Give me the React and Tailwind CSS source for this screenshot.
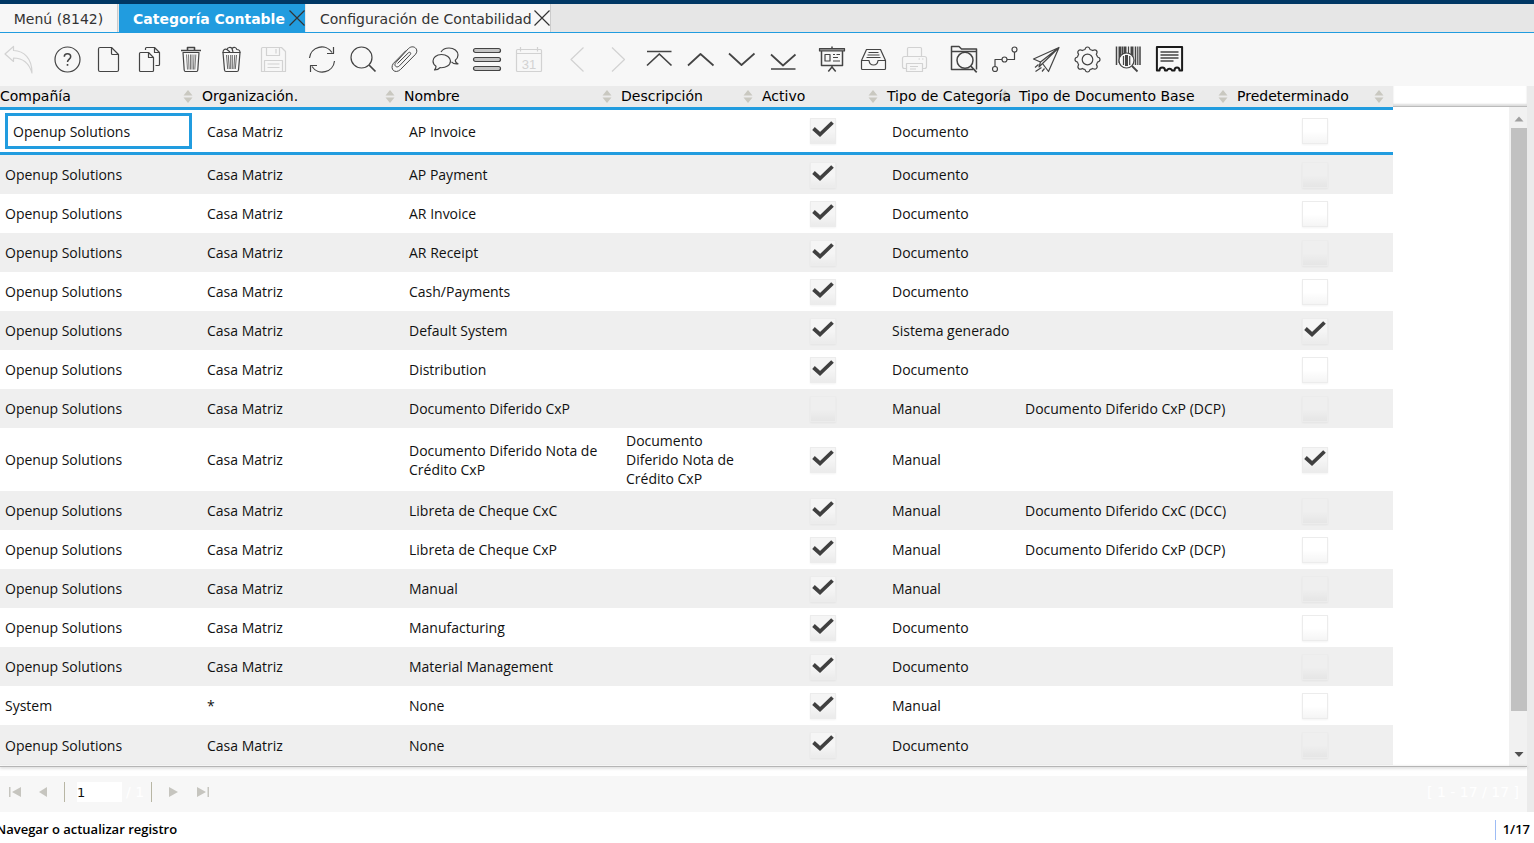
import React from "react";

const BARS = [5.5, 14.5, 23.5];

const ICONS = {
  undo: <path d="M4 11L12.500 3.500V7.500C23 8 31 15 31 30C28 20 22 15 12.500 15V18.500Z" />,
  help: (
    <>
      <circle cx="16.500" cy="16.500" r="12.500" />
      <path d="M13.300 13.800C13.300 9.800 19.700 9.900 19.700 13.700C19.700 16 16.500 16.200 16.500 19" strokeWidth="1.500" />
      <path d="M16.500 21V22.800" strokeWidth="1.600" />
    </>
  ),
  file: (
    <>
      <path d="M6.500 6Q6.500 4.500 8 4.500H19.500L26.500 11.500V27Q26.500 28.500 25 28.500H8Q6.500 28.500 6.500 27Z" />
      <path d="M19.500 4.500V10.500Q19.500 11.500 20.500 11.500H26.500" />
    </>
  ),
  copy: (
    <>
      <path d="M7.500 9.500H15.500L20.500 14.500V27.500Q20.500 28.500 19.500 28.500H7.500Q6.500 28.500 6.500 27.500V10.500Q6.500 9.500 7.500 9.500Z" />
      <path d="M15.500 9.500V14.500H20.500" />
      <path d="M12.500 7V5.500Q12.500 4.500 13.500 4.500H21.500L26.500 9.500V21.500Q26.500 22.500 25.500 22.500H22.500M21.500 4.500V9.500H26.500" />
    </>
  ),
  trash: (
    <>
      <path d="M7 7.500H27M13.500 7V4.500H20.500V7" strokeWidth="1.600" />
      <path d="M9 9.500H25L23.800 27Q23.700 28.500 22.500 28.500H11.500Q10.300 28.500 10.200 27Z" />
      <path d="M12.500 11.500L13.500 26.500M14.500 11.500L15 26.500M16.500 11.500V26.500M18 11.500V26.500M20 11.500L19.500 26.500M21.800 11.500L20.800 26.500" strokeWidth="0.700" />
    </>
  ),
  trashFull: (
    <>
      <path d="M8 9.500C8 6.500 10 5.500 12 6.500C12.500 4 16 4 17 5.500C19 3.500 21.500 4.500 21.800 6.500C24 6.500 25 8 25 9.500Z" />
      <path d="M12 6.500L15 9M17 5.500L18 9" />
      <path d="M8 9.500H25L23.500 27Q23.300 28.500 22 28.500H11Q9.700 28.500 9.500 27Z" />
      <path d="M11.500 12L12.700 26M13.300 12L14.300 26M15.700 12V26M17.300 12V26M19.700 12L18.900 26M21.500 12L20.300 26" strokeWidth="0.800" />
    </>
  ),
  save: (
    <>
      <path d="M6.500 4.500H25.500L29.500 8.500V28.500H5.500V5.500Q5.500 4.500 6.500 4.500Z" />
      <path d="M10.500 4.500V12.500H23.500V4.500M20 6V10.500M8.500 28.500V17.500H26.500V28.500M11.500 21H23.500M11.500 24.500H23.500" />
    </>
  ),
  refresh: (
    <>
      <path d="M3.500 15A12.300 12.300 0 0 1 26 9.500M28.500 18A12.300 12.300 0 0 1 6 23.500" />
      <path d="M27.500 4V10.500H21M4.500 29V22.500H11" />
    </>
  ),
  search: (
    <>
      <circle cx="14.500" cy="14.500" r="10.500" />
      <path d="M22 22L28.500 28.500" strokeWidth="1.700" />
    </>
  ),
  clip: (
    <path strokeWidth="1" d="M9.500 20.500L20.500 9.700C21.800 8.500 23.500 10 22.300 11.500L11.500 22.800C8.500 25.700 5.200 22.300 8 19.300L20.500 5.500C25.500 1 31.500 6.500 27.500 11.300L12.500 26.500C7 31.500 1.500 26 5.300 20.500L18 7.500" />
  ),
  chat: (
    <>
      <path d="M12.500 11.500C7.500 11.500 4 14.500 4 18C4 20.300 5.200 22 7 23.200C7 25 6.500 26 5.500 27C8 27 10 26 11 24.700C17 25.200 21.500 22 21.500 18C21.500 14.500 17.500 11.500 12.500 11.500Z" />
      <path d="M12 9C13.500 6.500 16.500 5 20 5C25 5 29 8 29 12C29 14.500 28 16 26.300 17.200C26.300 18.800 27 20 29 20.800C26 21.200 23.700 20.200 22.500 18.800" />
    </>
  ),
  menu: (
    <>
      {BARS.map((y) => (
        <rect key={y} x="3.500" y={y} width="27" height="4" rx="2" fill="#c4c4c4" />
      ))}
    </>
  ),
  calendar: (
    <>
      <rect x="5.500" y="6.500" width="25" height="22" rx="1" />
      <path d="M5.500 10.500H30.500M9.500 4V8.500M26.500 4V8.500" />
      <text x="18" y="25.500" textAnchor="middle" fontSize="13" stroke="none" fill="currentColor" className="font-['Liberation_Sans',sans-serif]">31</text>
    </>
  ),
  left: <path d="M22.500 4.500L10 16.500L22.500 28.500" />,
  right: <path d="M10 4.500L22.500 16.500L10 28.500" />,
  first: <path d="M4 8.500H28.500M4 22.500L16.300 11L28.500 22.500" strokeWidth="1.700" />,
  up: <path d="M4 22.500L16.500 11L29.500 22.500" strokeWidth="1.700" />,
  down: <path d="M4 10.500L16.500 22L29.500 10.500" strokeWidth="1.700" />,
  last: <path d="M5 11.500L17 22.500L29.500 11.500M5 26H29.500" strokeWidth="1.700" />,
  board: (
    <>
      <rect x="3.500" y="5.500" width="25" height="2.500" fill="#888" />
      <path d="M16 3.500V5.500M5.500 8V22.500H26.500V8M16 22.500V25M16 24L12.300 28.500M16 24L19.700 28.500" strokeWidth="1.500" />
      <path d="M9 11.500H14V18H9ZM17 11.500H19M20.500 11.500H24M17 14.500H22M17 18H24" />
    </>
  ),
  inbox: (
    <>
      <path d="M9.500 6.500H23.500L28.500 17.500V25.500Q28.500 26.500 27.500 26.500H5.500Q4.500 26.500 4.500 25.500V17.500Z" />
      <path d="M4.500 17.500H12Q12.500 22 16.500 22T21 17.500H28.500M11.500 9.500H21.500M10.500 12H22.500M9.500 14.500H23.500" />
    </>
  ),
  print: (
    <>
      <path d="M9.500 13V5.500Q9.500 4.500 10.500 4.500H22.500Q23.500 4.500 23.500 5.500V13" />
      <path d="M8.500 25.500H6.500Q4.500 25.500 4.500 23.500V15.500Q4.500 13.500 6.500 13.500H26.500Q28.500 13.500 28.500 15.500V23.500Q28.500 25.500 26.500 25.500H24.500" />
      <path d="M8.500 20.500H24.500V28.500H8.500ZM12 23.500H20M12 26H18M20.500 16H22M24 16H25.500" />
    </>
  ),
  folder: (
    <>
      <path d="M25 26.500H3.500V3.500H11L13.500 6H28.500V26.500M3.500 8.500H28.500" strokeWidth="1.500" />
      <circle cx="17" cy="17.300" r="8" fill="#f7f7f7" strokeWidth="1.500" />
      <path d="M22.700 23L28.700 29.300" strokeWidth="1.700" />
    </>
  ),
  route: (
    <>
      <circle cx="6" cy="26" r="2.500" />
      <circle cx="15.500" cy="16.500" r="2.500" />
      <circle cx="25.500" cy="6.500" r="2.500" />
      <path d="M6 23.500V16.500H13M18 16.500H25.500V9" />
    </>
  ),
  send: (
    <>
      <path d="M29 4.500L3.500 16L10.500 19L29 4.500L12.500 20.500L18.500 28.500L29 4.500" />
      <path d="M10.500 19L9 24L12.500 20.500M11.500 24.500L5.500 28.500M8.500 21.500L5 24.500M14.500 25.500L12 28.500" />
    </>
  ),
  gear: (
    <>
      <circle cx="16.500" cy="16.500" r="5.300" />
      <path d="M14 6.500Q14.500 4 16.500 4T19 6.500Q20.500 6.800 21.700 7.600Q24 6 25.400 7.500T25.300 11.300Q26.200 12.500 26.500 14Q29 14.500 29 16.500T26.500 19Q26.200 20.500 25.400 21.700Q27 24 25.500 25.400T21.700 25.400Q20.500 26.200 19 26.500Q18.500 29 16.500 29T14 26.500Q12.500 26.200 11.300 25.400Q9 27 7.600 25.500T7.600 21.700Q6.800 20.500 6.500 19Q4 18.500 4 16.500T6.500 14Q6.800 12.500 7.600 11.300Q6 9 7.500 7.600T11.300 7.600Q12.500 6.800 14 6.500Z" />
    </>
  ),
  barcode: (
    <>
      <path d="M4.500 3.500V22M23.500 3.500V22M28 3.500V22" strokeWidth="1.500" />
      <path d="M8 3.500V20M13 3.500V14M20 3.500V20" strokeWidth="3" />
      <path d="M10.500 3.500V12M16.500 3.500V12M25.800 3.500V22" strokeWidth="1.200" />
      <circle cx="14.500" cy="17.500" r="7.500" fill="#f7f7f7" />
      <path d="M11.500 13V22M17.700 13V22" strokeWidth="1.200" />
      <path d="M14.500 12V23" strokeWidth="3" />
      <path d="M20 23L25.500 28.500" strokeWidth="1.800" />
    </>
  ),
  report: (
    <>
      <path d="M3.900 4H29.100V27.500H26.500C26.500 23.500 21.500 23.500 21.500 27.500H19C18.500 25 14.500 25 14 27.500H12C12 23.500 6.500 23.500 6.500 27.500H3.900Z" strokeWidth="2" stroke="#1a1a1a" />
      <path d="M7.500 9H25.500M7.500 12H25.500M7.500 15H25.500M7.500 18H20.500" strokeWidth="1.600" />
    </>
  ),
};

const GROUPS = [
  [["undo", "Deshacer", true]],
  [["help", "Ayuda"], ["file", "Nuevo"], ["copy", "Copiar"], ["trash", "Eliminar"], ["trashFull", "Eliminar selección"], ["save", "Guardar", true]],
  [["refresh", "Refrescar"], ["search", "Buscar"], ["clip", "Adjuntar"], ["chat", "Chat"], ["menu", "Cambiar vista"], ["calendar", "Historial", true]],
  [["left", "Registro padre", true], ["right", "Registro detalle", true], ["first", "Primero"], ["up", "Anterior"], ["down", "Siguiente"], ["last", "Último"]],
  [["board", "Informe"], ["inbox", "Archivo"], ["print", "Imprimir", true]],
  [["folder", "Visor"], ["route", "Flujo de trabajo"], ["send", "Solicitudes"], ["gear", "Proceso"], ["barcode", "Información de producto"], ["report", "Exportar"]],
];

function ToolButton({ name, label, disabled }) {
  return (
    <button type="button" aria-label={label} disabled={disabled} className="flex w-[41px] shrink-0 justify-center text-[#444] disabled:text-[#d2d2d2]">
      <svg className="size-[33px]" viewBox="0 0 33 33" fill="none" stroke="currentColor" strokeWidth="1.200" strokeLinejoin="round">
        {ICONS[name]}
      </svg>
    </button>
  );
}

function CloseIcon() {
  return (
    <svg className="size-4" viewBox="0 0 16 16" fill="none" stroke="currentColor" strokeWidth="1.200">
      <path d="M0.500 0.500L15.500 15.500M15.500 0.500L0.500 15.500" />
    </svg>
  );
}

const COLUMNS = ["Compañía", "Organización.", "Nombre", "Descripción", "Activo", "Tipo de Categoría", "Tipo de Documento Base", "Predeterminado"];

const OS = "Openup Solutions";
const CM = "Casa Matriz";
const ROWS = [
  [OS, CM, "AP Invoice", "", true, "Documento", "", false],
  [OS, CM, "AP Payment", "", true, "Documento", "", false],
  [OS, CM, "AR Invoice", "", true, "Documento", "", false],
  [OS, CM, "AR Receipt", "", true, "Documento", "", false],
  [OS, CM, "Cash/Payments", "", true, "Documento", "", false],
  [OS, CM, "Default System", "", true, "Sistema generado", "", true],
  [OS, CM, "Distribution", "", true, "Documento", "", false],
  [OS, CM, "Documento Diferido CxP", "", false, "Manual", "Documento Diferido CxP (DCP)", false],
  [OS, CM, "Documento Diferido Nota de Crédito CxP", "Documento Diferido Nota de Crédito CxP", true, "Manual", "", true],
  [OS, CM, "Libreta de Cheque CxC", "", true, "Manual", "Documento Diferido CxC (DCC)", false],
  [OS, CM, "Libreta de Cheque CxP", "", true, "Manual", "Documento Diferido CxP (DCP)", false],
  [OS, CM, "Manual", "", true, "Manual", "", false],
  [OS, CM, "Manufacturing", "", true, "Documento", "", false],
  [OS, CM, "Material Management", "", true, "Documento", "", false],
  ["System", "*", "None", "", true, "Manual", "", false],
  [OS, CM, "None", "", true, "Documento", "", false],
];

function Tick({ checked, label }) {
  return (
    <span className="relative mx-auto block size-[26px]">
      <input
        type="checkbox"
        defaultChecked={checked}
        aria-label={label}
        className="peer block size-full appearance-none border border-[#ececec] bg-linear-to-b from-transparent from-50% to-black/4 shadow-[0_1px_2px_rgba(0,0,0,0.05)] checked:bg-[#f5f5f5]"
      />
      <svg className="pointer-events-none absolute inset-0 hidden size-full peer-checked:block" viewBox="0 0 26 26" fill="none" stroke="#404040" strokeWidth="3.800">
        <path d="M3.500 10.500L10 16.500L22.500 4.500" />
      </svg>
    </span>
  );
}

function SortArrows() {
  return (
    <svg className="absolute top-1 right-[9px] h-[13px] w-[10px] fill-[#c9c8c0]" viewBox="0 0 10 13">
      <path d="M5 0L9.500 5.500H0.500ZM0.500 7.500H9.500L5 13Z" />
    </svg>
  );
}

const cellClass = (i) => {
  if (i === 5) return "pl-[5px] whitespace-nowrap";
  if (i === 6) return "pl-1.5 whitespace-nowrap";
  return "py-[3px] pr-4 pl-[5px]";
};

function Row({ row, selected }) {
  const name = row[2];
  return (
    <tr className={selected ? "h-[45px] bg-white *:border-b-3 *:border-[#219cdf]" : "h-[39px] odd:bg-white even:bg-[#efefef] last:h-10"}>
      {row.map((v, i) => {
        if (typeof v === "boolean")
          return (
            <td key={i} className={i === 4 ? "pr-1" : ""}>
              <Tick checked={v} label={COLUMNS[i] + " " + name} />
            </td>
          );
        if (selected && i === 0)
          return (
            <td key={i} className="pl-[5px]">
              <input type="text" aria-label={COLUMNS[0]} defaultValue={v} className="block h-9 w-[187px] border-3 border-[#219cdf] bg-white px-[5px] outline-none" />
            </td>
          );
        return (
          <td key={i} className={cellClass(i)}>
            {v}
          </td>
        );
      })}
    </tr>
  );
}

function PagerButton({ label, d }) {
  return (
    <button type="button" aria-label={label} className="flex w-[30px] justify-center">
      <svg className="h-3 w-3 fill-[#c6c5bf]" viewBox="0 0 12 12">
        <path d={d} />
      </svg>
    </button>
  );
}

export default function App() {
  return (
    <div className="flex h-screen flex-col overflow-hidden bg-white font-['Open_Sans',sans-serif] text-sm text-[#111]">
      <div className="h-1 shrink-0 bg-[#003764]" />
      <nav className="flex h-[29px] shrink-0 border-b border-[#219cdf] bg-[#e6e6e6] font-['DejaVu_Sans',sans-serif] text-[#333]">
        <button type="button" className="w-[118px] border-r border-[#ccc] bg-[#f7f7f7] pt-0.5">Menú (8142)</button>
        <div className="ml-px flex w-[186px] items-center justify-between bg-[#219cdf] pl-3.5">
          <button type="button" className="pt-0.5 font-bold whitespace-nowrap text-white">Categoría Contable</button>
          <button type="button" aria-label="Cerrar Categoría Contable"><CloseIcon /></button>
        </div>
        <div className="ml-px flex w-[245px] items-center justify-between border-r border-[#ccc] bg-[#f7f7f7] pl-3.5">
          <button type="button" className="pt-0.5 whitespace-nowrap">Configuración de Contabilidad</button>
          <button type="button" aria-label="Cerrar Configuración de Contabilidad"><CloseIcon /></button>
        </div>
      </nav>

      <div role="toolbar" className="flex h-[53px] shrink-0 items-center gap-[9px] bg-[#f7f7f7]">
        {GROUPS.map((g, i) => (
          <div key={i} className="flex first:-ml-[3px]">
            {g.map(([name, label, disabled]) => (
              <ToolButton key={name} name={name} label={label} disabled={disabled} />
            ))}
          </div>
        ))}
      </div>

      <div className="flex min-h-0 flex-1 bg-[#ebebeb] pr-[7px]">
        <div className="flex min-w-0 flex-1 flex-col bg-white">
          <div className="flex min-h-0 flex-1 items-stretch overflow-hidden">
            <div className="shrink-0">
              <table className="w-[1393px] table-fixed border-separate border-spacing-0 text-left leading-[19px]">
                <colgroup>
                  <col className="w-[202px]" />
                  <col className="w-[202px]" />
                  <col className="w-[217px]" />
                  <col className="w-[141px]" />
                  <col className="w-[125px]" />
                  <col className="w-[132px]" />
                  <col className="w-[218px]" />
                  <col className="w-[156px]" />
                </colgroup>
                <thead>
                  <tr className="h-6 bg-[#ebebeb] font-['DejaVu_Sans',sans-serif] text-black">
                    {COLUMNS.map((c) => (
                      <th key={c} scope="col" className="relative border-b-3 border-[#219cdf] p-0 font-normal whitespace-nowrap">
                        <SortArrows />
                        <span className="relative">{c}</span>
                      </th>
                    ))}
                  </tr>
                </thead>
                <tbody>
                  {ROWS.map((r, i) => (
                    <Row key={i} row={r} selected={i === 0} />
                  ))}
                </tbody>
              </table>
            </div>
            <div className="flex min-w-0 flex-1 flex-col">
              <div className="h-[21px] shrink-0 border-b border-[#bbb] shadow-[inset_0_-2px_2px_#ddd]" />
              <div className="flex w-[18px] flex-1 flex-col items-end self-end bg-[#f1f1f1]">
                <svg className="h-[21px] w-4 shrink-0 fill-[#a0a0a0]" viewBox="0 0 16 21"><path d="M3.500 14.500L8 9.500L12.500 14.500Z" /></svg>
                <div className="w-4 flex-1 bg-[#c1c1c1]" />
                <svg className="h-[55px] w-4 shrink-0 fill-[#505050]" viewBox="0 0 16 55"><path d="M3.500 41L8 46L12.500 41Z" /></svg>
              </div>
            </div>
          </div>
          <div className="mb-[9px] h-px shrink-0 bg-[#b5b5b5] shadow-[0_1px_3px_#aaa]" />
          <div className="flex h-9 shrink-0 items-center bg-[#f7f7f7] pb-1 font-['DejaVu_Sans',sans-serif]">
            <div className="flex">
              <PagerButton label="Primera página" d="M0 1H1.500V11H0ZM12 1V11L3 6Z" />
              <PagerButton label="Página anterior" d="M8 1V11L0 6Z" />
            </div>
            <div className="ml-1 flex h-5 items-center border-x border-[#b8b6a4] pl-3">
              <input type="text" aria-label="Página" defaultValue="1" className="h-5 w-[45px] bg-white text-[13px]" />
              <span className="pr-[7px] pl-1 text-white">/ 1</span>
            </div>
            <div className="ml-1.5 flex">
              <PagerButton label="Página siguiente" d="M2 1V11L11 6Z" />
              <PagerButton label="Última página" d="M0 1V11L9 6ZM10.500 1H12V11H10.500Z" />
            </div>
            <span className="ml-auto pr-2 text-white">[ 1 - 17 / 17 ]</span>
          </div>
        </div>
      </div>

      <footer className="flex h-[31px] shrink-0 items-center justify-between pt-1 pr-1 text-[13px] font-semibold text-black">
        <span className="-ml-1">Navegar o actualizar registro</span>
        <span className="flex h-5 items-center border-l border-[#9dbcf5] pl-[7px]">1/17</span>
      </footer>
    </div>
  );
}
